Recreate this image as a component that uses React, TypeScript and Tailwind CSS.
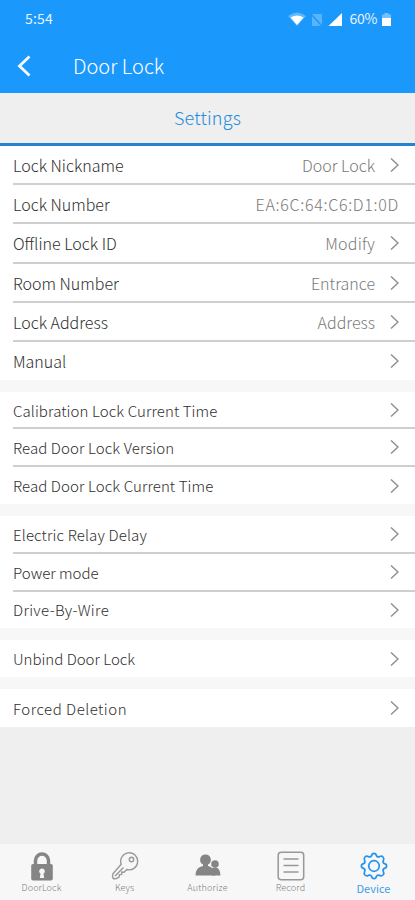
import React from "react";

interface RowProps {
  label: string;
  labelClass?: string;
  value?: string;
  valueClass?: string;
  rowClass?: string;
  lineClass?: string;
  arrow?: boolean;
}

const Row: React.FC<RowProps> = ({
  label,
  labelClass = "",
  value,
  valueClass = "",
  rowClass = "h-[38px]",
  lineClass = "",
  arrow = true,
}) => {
  return (
    <div className={`ml-[13px] flex items-center pr-4 ${rowClass} ${lineClass}`}>
      <span className={`whitespace-nowrap text-[#2e2e2e] ${labelClass}`}>{label}</span>
      {value && (
        <span className={`ml-auto whitespace-nowrap text-base text-[#7a7a7a] ${valueClass}`}>
          {value}
        </span>
      )}
      {arrow && (
        <svg
          className={value ? "ml-[15px] shrink-0" : "ml-auto shrink-0"}
          width="9"
          height="16"
          viewBox="0 0 9 16"
          fill="none"
          stroke="#8f8f8f"
          strokeWidth="1.5"
        >
          <path d="M1 1.5 8 8 1 14.5" />
        </svg>
      )}
    </div>
  );
};

const line = "border-b-2 border-[#cfcfcf]";

const StatusBar = () => (
  <div className="flex h-[38px] items-center pr-6 pl-[25px] text-[14px] text-[#e6f4ff]">
    <span className="-mt-0.5 font-normal tracking-[0.2px]">5:54</span>
    <svg className="ml-auto" width="61" height="16" viewBox="0 0 61 16">
      <path d="M0 5Q9 -2 18 5L9 15Z" fill="#fff" opacity=".3" />
      <path d="M2.500 6.500Q9 2.500 15.500 6.500L9 14Z" fill="#fff" />
      <path d="M24 3h10v12h-10z" fill="#fff" opacity=".28" />
      <path d="M23 3 34 15" stroke="#1b98fc" strokeWidth="1.5" />
      <path d="M54 2V15H40.500Z" fill="#fff" />
    </svg>
    <span className="-mt-0.5 font-normal tracking-[-0.3px]">60%</span>
    <svg className="ml-[5px]" width="9" height="15" viewBox="0 0 9 15">
      <path d="M2.500 1h4v1.500H9V7H0V2.500h2.500Z" fill="#fff" opacity=".4" />
      <path d="M0 6h9v8H0Z" fill="#fff" />
    </svg>
  </div>
);

const LockIcon = () => (
  <svg width="24" height="30" viewBox="0 0 24 30">
    <path d="M5.500 15V9.500a6.500 6.500 0 0 1 13 0V15" fill="none" stroke="#858585" strokeWidth="3.500" />
    <rect x="1.200" y="13" width="21.600" height="16.500" rx="1.800" fill="#858585" />
    <path d="M12 17.500a2.800 2.800 0 0 1 1.500 5.200l.7 4.300h-4.400l.7-4.300A2.800 2.800 0 0 1 12 17.500Z" fill="#f7f7f7" />
  </svg>
);

const KeyIcon = () => (
  <svg width="28" height="28" viewBox="0 0 28 28" fill="none" stroke="#999" strokeWidth="1.400">
    <path d="M10.200 12.300A8.500 8.500 0 1 1 15.800 17.500L13 20.200l-2.200-.1-.2 2.400-2.200.1-.2 2.300-2.500 1.600-3.200.2-1-1.700.4-3.200Z" />
    <path d="M4 24 12.500 15.500" />
    <circle cx="20.500" cy="7.500" r="2.200" />
  </svg>
);

const PeopleIcon = () => (
  <svg width="28" height="24" viewBox="0 0 28 24" fill="#858585">
    <circle cx="21" cy="10" r="3.800" />
    <path d="M18 21.500v-7q1-1 3.500-1 4.500 0 5 8Z" />
    <path d="M11.500 .5a5.300 5.300 0 0 1 2.500 10v1.500c4.500 1 7 4 7 9.500H1.500c.2-6 3.200-8.700 7.500-9.500V10.500A5.300 5.300 0 0 1 11.500 .5Z" />
  </svg>
);

const RecordIcon = () => (
  <svg width="28" height="30" viewBox="0 0 28 30" fill="none" stroke="#989898" strokeWidth="1.500">
    <rect x="1.200" y="1.200" width="25.500" height="27.500" rx="3" />
    <path d="M6.500 8h15M6.500 14.500h15M6.500 21h15" />
  </svg>
);

const GearIcon = () => (
  <svg width="28" height="28" viewBox="0 0 28 28" fill="none" stroke="#2492ee" strokeWidth="1.700" strokeLinejoin="round">
    <path d="M11.600 3.600Q12 1.400 14 1.400T16.400 3.600Q17.300 5.600 19.700 4.600Q21.600 3.600 23 5T23.400 8.300Q22.400 10.700 24.400 11.600Q26.600 12 26.600 14T24.400 16.400Q22.400 17.300 23.400 19.700Q24.400 21.600 23 23T19.700 23.400Q17.300 22.400 16.400 24.400Q16 26.600 14 26.600T11.600 24.400Q10.700 22.400 8.300 23.400Q6.400 24.400 5 23T4.600 19.700Q5.600 17.300 3.600 16.400Q1.400 16 1.400 14T3.600 11.600Q5.600 10.700 4.600 8.300Q3.600 6.400 5 5T8.300 4.600Q10.700 5.600 11.600 3.600Z" />
    <circle cx="14" cy="14" r="5.300" />
  </svg>
);

const tabs = [
  { name: "DoorLock", icon: <LockIcon />, style: "text-[9px] tracking-[0.1px] text-[#7c7c7c]" },
  { name: "Keys", icon: <KeyIcon />, style: "text-[9px] text-[#7c7c7c]" },
  { name: "Authorize", icon: <PeopleIcon />, style: "text-[9px] tracking-[0.2px] text-[#7c7c7c]" },
  { name: "Record", icon: <RecordIcon />, style: "text-[9px] tracking-[0.2px] text-[#7c7c7c]" },
  { name: "Device", icon: <GearIcon />, style: "text-[11px] font-normal text-[#3f9dec]" },
];

const App: React.FC = () => {
  return (
    <div className="flex h-[900px] w-[415px] flex-col overflow-hidden bg-[#efefef] font-['Noto_Sans_CJK_SC',sans-serif] font-light">
      <header className="h-[93px] shrink-0 bg-[#1b98fc]">
        <StatusBar />
        <div className="flex h-14 items-center pl-[17px]">
          <svg width="15" height="24" viewBox="0 0 15 24" fill="none" stroke="#f4faff" strokeWidth="2.800">
            <path d="M12.500 2.500 2.500 12 12.500 21.500" />
          </svg>
          <h1 className="ml-[41px] text-[20px] text-white">Door Lock</h1>
        </div>
      </header>
      <div className="flex h-[53px] shrink-0 items-center justify-center border-b-[3px] border-[#2584d0] bg-[#efefef] pb-px text-[18px] tracking-[0.2px] text-[#238be0]">
        Settings
      </div>

      <main className="flex flex-col gap-3 bg-[#f7f7f7]">
        <section className="bg-white text-base">
          <Row label="Lock Nickname" value="Door Lock" rowClass="h-[39px]" lineClass={line} />
          <Row
            label="Lock Number"
            value="EA:6C:64:C6:D1:0D"
            valueClass="tracking-[0.7px]"
            arrow={false}
            rowClass="h-[39px]"
            lineClass={line}
          />
          <Row label="Offline Lock ID" value="Modify" valueClass="tracking-[0.2px]" rowClass="h-10" lineClass={line} />
          <Row label="Room Number" value="Entrance" rowClass="h-[39px]" lineClass={line} />
          <Row label="Lock Address" value="Address" rowClass="h-[39px]" lineClass={line} />
          <Row label="Manual" rowClass="h-[38px]" />
        </section>
        <section className="bg-white text-[15px] tracking-[0.1px]">
          <Row label="Calibration Lock Current Time" labelClass="pt-[3px]" rowClass="h-[37px]" lineClass={line} />
          <Row label="Read Door Lock Version" labelClass="pt-[3px]" lineClass={line} />
          <Row label="Read Door Lock Current Time" labelClass="pt-0.5" rowClass="h-[37px]" />
        </section>
        <section className="bg-white text-[15px]">
          <Row label="Electric Relay Delay" labelClass="pt-0.5 tracking-[0.15px]" lineClass={line} />
          <Row label="Power mode" labelClass="pt-0.5" lineClass={line} />
          <Row label="Drive-By-Wire" labelClass="tracking-[0.35px]" rowClass="h-9" />
        </section>
        <section className="bg-white text-[15px]">
          <Row label="Unbind Door Lock" labelClass="pt-0.5" rowClass="h-[37px]" />
        </section>
        <section className="bg-white text-[15px]">
          <Row label="Forced Deletion" labelClass="pt-0.5 tracking-[0.5px]" />
        </section>
      </main>

      <nav className="mt-auto grid h-14 shrink-0 grid-cols-5 bg-[#f7f7f7]">
        {tabs.map((tab) => (
          <div key={tab.name} className="flex flex-col items-center pt-[7px]">
            <div className="flex h-[30px] items-center">{tab.icon}</div>
            <span className={`leading-[14px] ${tab.style}`}>{tab.name}</span>
          </div>
        ))}
      </nav>
    </div>
  );
};

export default App;
